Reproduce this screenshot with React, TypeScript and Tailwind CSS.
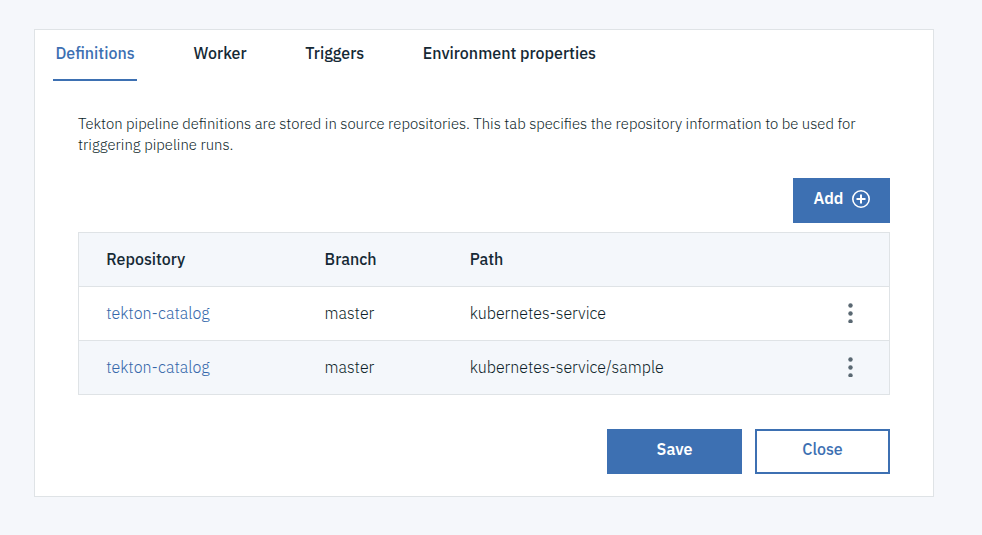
import React from "react";

const tabs = [
  { label: "Worker", place: "ml-[56.5px]" },
  { label: "Triggers", place: "ml-[58.7px]" },
  { label: "Environment properties", place: "ml-[58.5px]" },
];

const rows = [
  { repo: "tekton-catalog", branch: "master", path: "kubernetes-service", tone: "bg-white" },
  { repo: "tekton-catalog", branch: "master", path: "kubernetes-service/sample", tone: "bg-[#f4f7fb]" },
];

const columns = "grid grid-cols-[218.3px_145.1px_1fr_80px] items-center h-[54px] pb-[2px] pl-[27.3px] border-b border-[#dfe3e6]";

function Overflow() {
  return (
    <svg className="mt-px ml-[39px] h-5 w-[6px]" viewBox="0 0 6 20" fill="#5a6872" aria-hidden="true">
      <circle cx="2.5" cy="2.5" r="2.2" />
      <circle cx="2.5" cy="10.5" r="2.2" />
      <path d="M.3 18.5a2.2 2.2 0 0 1 4.4 0q0 1-.7 1.5H1q-.7-.5-.7-1.5z" />
    </svg>
  );
}

export default function App() {
  return (
    <div className="h-[535px] w-[982px] overflow-hidden bg-[#f5f7fb] pl-[34px] pt-[29px] font-['IBM_Plex_Sans',Roboto,sans-serif] text-[16px] text-[#152935]">
      <main className="h-[468px] w-[900px] border border-[#dfe3e6] bg-white">
        <nav className="flex pl-[18px] pt-[13px] font-medium leading-5">
          <button className="h-[38px] w-[84px] border-b-2 border-[#3d70b2] pb-[16px] text-[#3d70b2]">
            Definitions
          </button>
          {tabs.map((t) => (
            <button key={t.label} className={`h-5 whitespace-nowrap ${t.place}`}>
              {t.label}
            </button>
          ))}
        </nav>
        <section className="pl-[43px] pr-[43px]">
          <p className="mt-[32px] whitespace-nowrap text-[14.86px] font-light leading-[21px] text-[#0c1e29]">
            Tekton pipeline definitions are stored in source repositories. This tab specifies the repository information to be used for
            <br />
            triggering pipeline runs.
          </p>
          <div className="mt-[23px] flex justify-end">
            <button className="flex h-[45px] w-[97px] items-center bg-[#3d70b2] pb-[3px] pl-[20.4px] font-semibold text-white">
              <span className="w-[37.6px] pb-[2px] text-left">Add</span>
              <svg className="h-5 w-5" viewBox="0 0 20 20" fill="none" stroke="white" aria-hidden="true">
                <circle cx="10" cy="10" r="8.2" strokeWidth="1.6" />
                <path d="M10 5.5v9M5.5 10h9" strokeWidth="2" />
              </svg>
            </button>
          </div>
          <div className="mt-[9px] border border-b-0 border-[#dfe3e6]">
            <div className={`${columns} bg-[#f4f7fb] font-medium`}>
              <span>Repository</span>
              <span>Branch</span>
              <span>Path</span>
            </div>
            {rows.map((r) => (
              <div key={r.path} className={`${columns} font-light text-[#0c1e29] ${r.tone}`}>
                <a className="text-[#3467aa]">{r.repo}</a>
                <span>{r.branch}</span>
                <span>{r.path}</span>
                <Overflow />
              </div>
            ))}
          </div>
          <div className="mt-[34px] flex justify-end gap-[13px]">
            <button className="h-[45px] w-[135px] bg-[#3d70b2] pb-[5px] font-semibold text-white">Save</button>
            <button className="h-[45px] w-[135px] border-2 border-[#3d70b2] pb-[5px] font-medium text-[#3d70b2]">Close</button>
          </div>
        </section>
      </main>
    </div>
  );
}
